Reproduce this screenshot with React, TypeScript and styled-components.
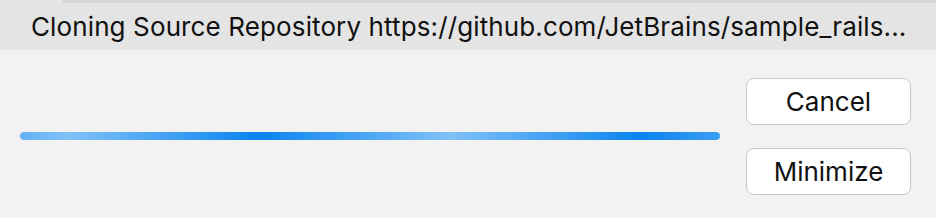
import styled, { createGlobalStyle } from "styled-components";

const GlobalStyle = createGlobalStyle`
  html, body {
    margin: 0;
    padding: 0;
    background: #f2f2f2;
  }
  body {
    font-family: "Inter", "Liberation Sans", sans-serif;
  }
`;

function App() {
  return (
    <>
      <GlobalStyle />
      <Window>
        <TopEdge>
          <TopEdgeLight />
        </TopEdge>
        <TitleBar>
          <Title>
            Cloning Source Repository https://github.com/JetBrains/sample_rails...
          </Title>
        </TitleBar>
        <Body>
          <ProgressArea>
            <ProgressTrack />
          </ProgressArea>
          <Buttons>
            <Button>Cancel</Button>
            <Button>Minimize</Button>
          </Buttons>
        </Body>
      </Window>
    </>
  );
}

export default App;

const Window = styled.div`
  width: 936px;
  height: 218px;
  display: flex;
  flex-direction: column;
  background: #f2f2f2;
  overflow: hidden;
`;

const TopEdge = styled.div`
  height: 3px;
  background: #d8d8d8;
  display: flex;
`;

const TopEdgeLight = styled.div`
  width: 62px;
  background: #e6e6e6;
`;

const TitleBar = styled.div`
  height: 47px;
  background: #e4e4e4;
  display: flex;
  align-items: center;
  padding-left: 31px;
`;

const Title = styled.div`
  font-size: 26px;
  line-height: 30px;
  color: #111;
  white-space: nowrap;
  letter-spacing: 0.12px;
`;

const Body = styled.div`
  flex: 1;
  display: flex;
  padding: 28px 25px 0 20px;
  gap: 26px;
`;

const ProgressArea = styled.div`
  flex: 1;
  display: flex;
  align-items: flex-start;
  padding-top: 54px;
`;

const ProgressTrack = styled.div`
  width: 100%;
  height: 8px;
  border-radius: 4px;
  background: repeating-linear-gradient(
    90deg,
    #0a84f0 -143px,
    #80c1f8 48px,
    #0a84f0 239px
  );
`;

const Buttons = styled.div`
  display: flex;
  flex-direction: column;
  gap: 23px;
`;

const Button = styled.button`
  width: 165px;
  height: 47px;
  background: #ffffff;
  border: 1.5px solid #c8c8c8;
  border-radius: 8px;
  font-family: "Inter", "Liberation Sans", sans-serif;
  font-size: 26px;
  color: #111;
  padding: 0;
  cursor: pointer;
`;
